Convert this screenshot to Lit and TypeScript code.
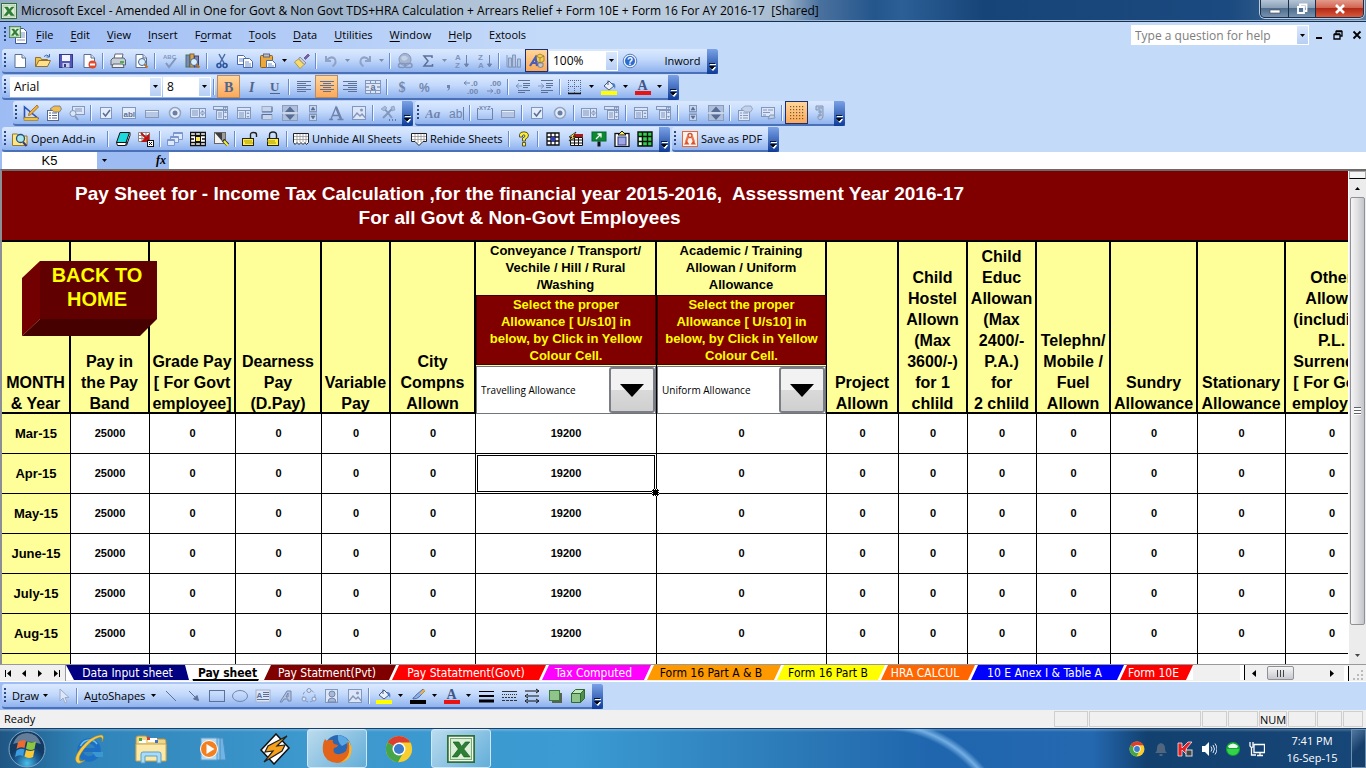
import { LitElement, html, svg, css, nothing } from "lit";
import { customElement } from "lit/decorators.js";
import { classMap } from "lit/directives/class-map.js";
import { styleMap } from "lit/directives/style-map.js";

const G = "#8297bd";
const page = svg`<path d="M3 1.5h7l3.500 3.500v9.500h-10.500z" fill="#fff" stroke="#5b6f93"/><path d="M10 1.500v3.500h3.500" fill="#dce6f6" stroke="#5b6f93"/>`;
const lens = svg`<path d="M11.500 11.500l3 3" stroke="#c0731c" stroke-width="2"/><circle cx="9" cy="9" r="3.500" fill="#d8efff" stroke="#4a6386"/>`;
const bucket = svg`<path d="M3 7l5-5 5 5-5 4z" fill="#e9f0fa" stroke="#46597c"/><path d="M7 6V1.500" stroke="#46597c"/><path d="M11 4c3 0 4 2 3 6-1-2-1-3-3-4z" fill="#4f7fc4"/>`;
const list = (c: string) => svg`<rect x=".5" y="3.500" width="15" height="9" fill="#d9e4f6" stroke="${c}"/><path d="M9.500 4v9M2 6h6M2 8h6M2 10h6M10 8h5" stroke="${c}"/><path d="M11 7h3l-1.500-2zM11 9h3l-1.500 2z" fill="${c}"/>`;
const combo = svg`<rect x=".5" y="1.500" width="14" height="3" fill="#d9e4f6" stroke="${G}"/><rect x="3.500" y="5.500" width="11" height="9" fill="#d9e4f6" stroke="${G}"/><path d="M10.500 1v14M5 8h4M5 10h4M5 12h4" stroke="${G}"/><path d="M11 2h3l-1.500 2zM11 8h3l-1.500-2zM11 11h3l-1.500 2z" fill="${G}"/>`;
const listDoc = svg`<rect x="1.500" y="2.500" width="13" height="11" fill="#d9e4f6" stroke="${G}"/><path d="M1 5.500h14M9.500 5v9M3 8h5M3 10h5M3 12h5" stroke="${G}"/><path d="M10.500 9h3l-1.500-2zM10.500 11h3l-1.500 2z" fill="${G}"/>`;
const cb = svg`<rect x="2.500" y="2.500" width="11" height="11" fill="#e4edfb" stroke="${G}"/><path d="M5 8l2.500 3L12 5" stroke="#5a6e94" stroke-width="1.500" fill="none"/>`;
const radio = svg`<circle cx="8" cy="8" r="5.500" fill="#e4edfb" stroke="#93a3c0" stroke-width="1.500"/><circle cx="8" cy="8" r="2.500" fill="#6b7fa5"/>`;
const btn = svg`<rect x="1.500" y="5.500" width="13" height="7" fill="#b8c8e4" stroke="#8799ba"/><path d="M2 6.500h12" stroke="#e8f0fc"/>`;
const spin = svg`<rect x=".5" y=".5" width="15" height="15" fill="#aebfdc" stroke="#8a9cbd"/><path d="M0 8h16" stroke="#e6eefb"/><path d="M3 7h10L8 1.500zM3 9.500h10L8 15z" fill="#586d94"/>`;
const scroll = svg`<rect x="4.500" y=".5" width="7" height="6" fill="#c7d5ec" stroke="${G}"/><rect x="4.500" y="9.500" width="7" height="6" fill="#c7d5ec" stroke="${G}"/><path d="M6 5h4L8 2zM6 11h4l-2 3zM4 8h8" fill="#586d94" stroke="#586d94" stroke-width=".6"/>`;
const prop = (a: string, b: string, c: string) => svg`<rect x="1.500" y="5.500" width="11" height="10" fill="${a}" stroke="${b}"/><path d="M3 8h2M6 8h5M3 10.500h2M6 10.500h5M3 13h2M6 13h5" stroke="${b}"/><path d="M4 4l4-3 6 0 1.500 3-2 3-5 0z" fill="${c}" stroke="${b}" stroke-width=".7"/>`;
const pic = svg`<rect x="1.500" y="1.500" width="13" height="13" fill="#dce6f6" stroke="${G}"/><path d="M2 13l4-5 3 3 2-2 3.500 4" fill="none" stroke="${G}" stroke-width="1.300"/><circle cx="10.500" cy="5" r="1.500" fill="${G}"/>`;
const lines = (rows: number[][], c = "#5d7097") => svg`${rows.map(([x, y, w]) => svg`<path d="M${x} ${y + 0.5}h${w}" stroke="${c}"/>`)}`;
const unhideSheet = svg`<path d="M.5 2.500h15v9l-2 2-1.500-2-2 2-2-2-2 2-2-2-2 2-1.500-2z" fill="#fff" stroke="#222"/><path d="M1 5.500h14M1 8.500h14M4 3v8M7 3v8M10 3v8M13 3v8" stroke="#8b8b8b" stroke-width=".7"/>`;
const rehideSheet = svg`<path d="M.5 2.500h15v8h-3.500l-4 4-4-4H.5z" fill="#fff" stroke="#222"/><path d="M1 5.500h14M1 8.500h14M4 3v7M7 3v9M10 3v8M13 3v7" stroke="#8b8b8b" stroke-width=".7"/>`;
const lock = (open: boolean) => svg`<rect x="${open ? 0.5 : 2.5}" y="7.500" width="11" height="7" fill="#ffee3a" stroke="#222"/><path d="M2 10h8M3 12h8" stroke="#a99700"/><path d="${open ? "M8.500 7V3.500q0-2 3-2t3 2V6" : "M4.500 7V4q0-3 3.500-3t3.500 3v3"}" fill="none" stroke="#222" stroke-width="1.400"/>`;
const letter = (t: string, x: number, y: number, s: number, c: string) => svg`<text class="gl" x="${x}" y="${y}" font-size="${s}" fill="${c}" font-weight="bold">${t}</text>`;
const excel = svg`<rect x=".5" y=".5" width="15" height="15" fill="#f4faf1" stroke="#2f7034"/><rect x="2" y="2" width="12" height="12" fill="#dcefd8" stroke="#79aa77" stroke-width=".6"/><path d="M3.500 4h3.300l1.500 2.500L10.500 4h2.500L9.600 8l3.600 4.500H9.700L8 10l-2 2.500H3L6.500 8z" fill="#2c8034" stroke="#175b20" stroke-width=".4"/>`;
const chrome = svg`<circle cx="8" cy="8" r="7.500" fill="#f7ce2d"/><path d="M8 8L1.500 4.300A7.500 7.500 0 0 1 14.500 4.300H8z" fill="#dc3e30"/><path d="M1.500 4.300A7.500 7.500 0 0 0 7.400 15.500L10.500 10 8 8z" fill="#46a54a"/><circle cx="8" cy="8" r="3.700" fill="#fff"/><circle cx="8" cy="8" r="2.900" fill="#3b7ccd"/>`;

const ICONS: Record<string, unknown> = {
  new: page,
  open: svg`<path d="M.5 13.500v-9h5l1 2h6v7z" fill="#f0c453" stroke="#94702a"/><path d="M.8 13.500l3-6h11.700l-3 6z" fill="#ffe08a" stroke="#94702a"/><path d="M9 3.500q3-3 5 0M14.500 1v3h-3" fill="none" stroke="#3d66ac"/>`,
  save: svg`<rect x="1.500" y="1.500" width="13" height="13" fill="#5257b8" stroke="#343a86"/><rect x="4" y="2" width="8" height="6" fill="#f2f5ff"/><rect x="4.500" y="10" width="7" height="4.500" fill="#c9cee6"/><rect x="6" y="11" width="2" height="3" fill="#333a80"/>`,
  perm: svg`${page}<circle cx="11.500" cy="11.500" r="4" fill="#e0492b"/><rect x="9" y="10.500" width="5" height="2" fill="#fff"/>`,
  print: svg`<path d="M4 6l1-5h8l-1 5z" fill="#fff" stroke="#667"/><path d="M1 7l2-2h11l1.500 2v5h-14.500z" fill="#c9ced6" stroke="#5a6373"/><path d="M3 11h10l1 3.500H2z" fill="#efefef" stroke="#5a6373"/><rect x="10" y="8" width="4" height="2" fill="#45b348"/>`,
  preview: svg`${page}${lens}`,
  spell: svg`${letter("ABC", 1, 6, 6, G)}<path d="M4 10l3 4 7-9" fill="none" stroke="${G}" stroke-width="2"/>`,
  research: svg`<rect x="1" y="2" width="3.500" height="12" fill="#7d86c5" stroke="#475"/><rect x="5" y="1" width="4" height="13" fill="#d9a24f" stroke="#764"/><rect x="9.500" y="3" width="4" height="11" fill="#8b80b8" stroke="#446"/>${lens}`,
  cut: svg`<path d="M5 1l5 9M11 1L6 10" stroke="#4a6ba6" stroke-width="1.500"/><circle cx="5" cy="12.500" r="2" fill="none" stroke="#28529a" stroke-width="1.600"/><circle cx="11" cy="12.500" r="2" fill="none" stroke="#28529a" stroke-width="1.600"/>`,
  copy: svg`<path d="M.5 2.500h6l2 2v7H.5z" fill="#fff" stroke="#4a6ba6"/><path d="M2 6h4M2 8h4" stroke="#6d8fc9"/><path d="M6.500 5.500h6l3 3v6h-9z" fill="#fff" stroke="#4a6ba6"/><path d="M8 9h4M8 11h6M8 13h6" stroke="#6d8fc9"/>`,
  paste: svg`<rect x=".5" y="2.500" width="12" height="12" rx="1" fill="#e9a93f" stroke="#8b6020"/><rect x="3.500" y="1" width="6" height="3" fill="#b8c0cc" stroke="#667"/><path d="M6.500 7.500h6l3 3v4h-9z" fill="#fff" stroke="#4a6ba6"/><path d="M8 11h4M8 13h6" stroke="#6d8fc9"/>`,
  brush: svg`<path d="M10 5l4-4 1.500 1.500-4 4z" fill="#7c5fa8" stroke="#4d3b77" stroke-width=".6"/><path d="M6 4l6 6-2 1.500L4.500 6z" fill="#c9ced6" stroke="#667" stroke-width=".6"/><path d="M4.500 6l5.500 5.500-4 4L.5 9z" fill="#f6dc6d" stroke="#a58120" stroke-width=".7"/>`,
  undo: svg`<path d="M3 3v5h5M3.500 7.500q4-5 8-2 3 4-2 8" fill="none" stroke="#90a3c7" stroke-width="2"/>`,
  redo: svg`<path d="M13 3v5H8M12.500 7.500q-4-5-8-2-3 4 2 8" fill="none" stroke="#90a3c7" stroke-width="2"/>`,
  link: svg`<circle cx="8" cy="6.500" r="6" fill="#a6b6d3" stroke="#8496ba"/><path d="M4 4q4-3 7 1-2 4-6 2z" fill="#c3d0e6"/><rect x="1.500" y="10.500" width="7" height="4" rx="2" fill="none" stroke="#8496ba" stroke-width="1.500"/><rect x="8" y="10.500" width="7" height="4" rx="2" fill="none" stroke="#8496ba" stroke-width="1.500"/>`,
  sum: svg`<path d="M12 5V3H4L8 8 4 13H12.500V11" fill="none" stroke="#5d7097" stroke-width="1.500"/>`,
  az: svg`${letter("A", 1, 7, 8, "#7f93b9")}${letter("Z", 1, 15, 8, "#7f93b9")}<path d="M12.500 2v10M10.500 11l2 3L14.500 11z" stroke="#7084ab" fill="#7084ab"/>`,
  za: svg`${letter("Z", 1, 7, 8, "#7f93b9")}${letter("A", 1, 15, 8, "#7f93b9")}<path d="M12.500 2v10M10.500 11l2 3L14.500 11z" stroke="#7084ab" fill="#7084ab"/>`,
  chart: svg`<path d="M1 2v12h14" fill="none" stroke="${G}"/><path d="M2.500 5h3v9h-3zM6.500 2h3v12h-3zM11.500 6h3v8h-3z" fill="#b4c3de" stroke="${G}"/>`,
  drawing: svg`<path d="M7 3l4-2 4 2v5l-4 2-4-2z" fill="#f1cd57" stroke="#8a6c1c" stroke-width=".7"/><path d="M7 3l4 2 4-2M11 5v5" fill="none" stroke="#8a6c1c" stroke-width=".7"/><path d="M9 10h5v3.500q-2.500 2-5 0z" fill="#c4c8d2" stroke="#5c6577" stroke-width=".7"/><path d="M1 13L6.500 4.500 8 13M3 10h5" fill="none" stroke="#4a5fb4" stroke-width="2.200"/>`,
  help: svg`<circle cx="8" cy="8" r="6.800" fill="#e5effd" stroke="#5a7fbd"/><circle cx="8" cy="8" r="5" fill="#2c6bd0"/>${letter("?", 5, 11.6, 10, "#fff")}`,
  b: svg`<text class="se" x="3" y="13" font-size="14" font-weight="bold" fill="#51648b">B</text>`,
  i: svg`<text class="se" x="5" y="13" font-size="14" font-weight="bold" font-style="italic" fill="#51648b">I</text>`,
  u: svg`<text class="se" x="3" y="12" font-size="13" font-weight="bold" fill="#51648b">U</text><path d="M3 14.500h10" stroke="#51648b"/>`,
  left: lines([[1, 2, 14], [1, 4, 9], [1, 6, 14], [1, 8, 9], [1, 10, 14], [1, 12, 9]]),
  center: lines([[1, 2, 14], [4, 4, 8], [1, 6, 14], [4, 8, 8], [1, 10, 14], [4, 12, 8]]),
  right: lines([[1, 2, 14], [6, 4, 9], [1, 6, 14], [6, 8, 9], [1, 10, 14], [6, 12, 9]]),
  merge: svg`<rect x=".5" y="1.500" width="15" height="13" fill="#dce6f6" stroke="${G}"/><path d="M1 4.500h14M1 11.500h14M5.500 2v2M10.500 2v2M5.500 12v3M10.500 12v3" stroke="${G}"/>${letter("a", 5.5, 10.5, 9, "#5d7097")}<path d="M1 8h3M12 8h3" stroke="#5d7097"/>`,
  usd: svg`<text class="se" x="4.500" y="13" font-size="14" font-weight="bold" fill="#7286ad">$</text>`,
  pct: letter("%", 2, 13, 12, "#7286ad"),
  comma: svg`<path d="M7 6h3v3q0 2-3 3 1.500-1.500 1.500-3H7z" fill="#7286ad"/>`,
  decup: svg`${letter(".0", 8, 7, 8, "#7286ad")}${letter(".00", 4, 15, 8, "#7286ad")}<path d="M7 4H1M3.500 2L1 4l2.500 2" stroke="#7286ad" fill="none"/>`,
  decdn: svg`${letter(".00", 4, 7, 8, "#7286ad")}${letter(".0", 8, 15, 8, "#7286ad")}<path d="M1 12h6M4.500 10L7 12l-2.500 2" stroke="#7286ad" fill="none"/>`,
  outd: svg`${lines([[3, 1, 12], [8, 4, 7], [8, 6, 7], [8, 8, 5], [3, 11, 12], [3, 13, 7]])}<path d="M7 7H1M4 4.500L1 7l3 2.500" stroke="${G}" fill="none"/>`,
  ind: svg`${lines([[3, 1, 12], [8, 4, 7], [8, 6, 7], [8, 8, 5], [3, 11, 12], [3, 13, 7]])}<path d="M0 7h6M3 4.500L6 7 3 9.500" stroke="${G}" fill="none"/>`,
  bord: svg`<path d="M1.500 1v13M7.500 1v13M13.500 1v13M1 1.500h13M1 7.500h13" stroke="#51648b" stroke-dasharray="1 1"/><path d="M1 14.500h13" stroke="#111" stroke-width="1.500"/>`,
  fill: svg`${bucket}<rect x="0" y="12" width="16" height="4" fill="#ffff00"/>`,
  font: svg`<text class="se" x="2.500" y="11" font-size="14" font-weight="bold" fill="#3f5787">A</text><rect x="0" y="12" width="16" height="4" fill="#e81313"/>`,
  design: svg`<path d="M1.500 2v11h13z" fill="#cfdcf7" stroke="#2b52b0" stroke-width="1.600"/><path d="M6 8l8-8 1.500 2-8 8-2 .5z" fill="#f2b23c" stroke="#875a12" stroke-width=".7"/><rect x="1" y="12.500" width="14" height="3" fill="#f0c040" stroke="#96711c" stroke-width=".6"/>`,
  prop: prop("#fff", "#59688a", "#f0bd4f"),
  propg: prop("#dce6f6", G, "#c2d0e8"),
  code: svg`<rect x="3.500" y="1.500" width="12" height="8" fill="#dce6f6" stroke="${G}"/><path d="M6 4h7M6 6h7" stroke="${G}"/><circle cx="4" cy="8.500" r="3" fill="#dce6f6" stroke="${G}"/><path d="M6 11l3 4" stroke="${G}" stroke-width="2"/>`,
  form: svg`<rect x="1.500" y="2.500" width="13" height="9" fill="#dce6f6" stroke="${G}"/><path d="M3 5h4M8 5h5M3 7.500h7M3 10h3" stroke="${G}"/><path d="M8 14l2-4 4 0 1 3z" fill="#c2d0e8" stroke="${G}"/>`,
  cb, radio, btn, spin, scroll, pic, combo, listDoc,
  list: list(G),
  ab: svg`<rect x="1.500" y="2.500" width="13" height="11" fill="#e4edfb" stroke="${G}"/>${letter("abl", 2.5, 11.5, 8, "#5d7097")}`,
  toggle: svg`<rect x="3" y="1.500" width="10" height="5" fill="#c7d5ec" stroke="#9aabca"/><path d="M3 7h10v-5" stroke="#5d7097" fill="none"/><rect x="3" y="9.500" width="10" height="5" fill="#c7d5ec" stroke="#9aabca"/><path d="M3 14V9.500h10" stroke="#5d7097" fill="none"/>`,
  bigA: svg`<path d="M1 14.500h4M9.500 14.500h6M3 14L8 2l5 12M4.500 10.500h6.500" fill="none" stroke="#6f83aa" stroke-width="1.300"/><path d="M8 2l5 12" stroke="#6f83aa" stroke-width="2.400"/>`,
  tools: svg`<path d="M3 13L12 4M4 3l8 10" stroke="${G}" stroke-width="2"/><path d="M1 4l4-3 2 2-3 3zM11 2l3-1 1 4-3 1z" fill="#a9b9d5" stroke="${G}" stroke-width=".6"/><path d="M9 15h1M12 15h1M15 15h1" stroke="#51648b" stroke-width="1.500"/>`,
  aa: svg`<text class="se" x="0" y="13" font-size="13" font-weight="bold" font-style="italic" fill="#6f83aa">Aa</text>`,
  abl: svg`<text class="gl" x="1" y="13" font-size="12" fill="#6f83aa">ab</text><path d="M15.500 2v13" stroke="#6f83aa"/>`,
  xyz: svg`<path d="M2 3.500H.5v11h15v-11H14" fill="none" stroke="#6f83aa"/>${letter("XYZ", 2, 5, 6, "#6f83aa")}`,
  dots: svg`<g fill="#7c5a22">${[1, 4, 7, 10, 13].map((x) => [1, 4, 7, 10, 13].map((y) => svg`<rect x="${x}" y="${y}" width="1.200" height="1.200"/>`))}</g>`,
  run: svg`<path d="M4 1h7v10q0 3-3 4-3-1-2-4h2V5H4z" fill="#b8c6de" stroke="${G}"/><path d="M6 3h4M6 7h4M6 10h4" stroke="${G}"/>`,
  addin: svg`<path d="M.5 3h5l1.500 2h8v9.500H.5z" fill="#fbe58a" stroke="#97792b"/><path d="M11 11l3.500 4" stroke="#3f3a70" stroke-width="2"/><circle cx="8.500" cy="7.500" r="4" fill="#a8e6ee" stroke="#284e78" stroke-width="1.300"/>`,
  eraser: svg`<path d="M5 1.500h9.500L11 11.500H1.500z" fill="#1bd9dc" stroke="#111"/><path d="M1.500 11.500l1 3h8l1-3zM11.500 14.500l3.500-10v-3" fill="#fff" stroke="#111"/>`,
  gridx: svg`<path d="M.5 1.500h11v9H.5zM.5 4.500h11M.5 7.500h11M4 1.500v9M8 1.500v9" fill="#fff" stroke="#888"/><path d="M3 2l7 7M10.500 4.500V10H5z" fill="#d22020" stroke="#c01010" stroke-width="1.800"/><rect x="9.500" y="9.500" width="6" height="6" fill="#fff" stroke="#111"/><path d="M11 11l3 3M14 11l-3 3" stroke="#111"/>`,
  cascade: svg`<path d="M6.500 1.500h9v7h-9z" fill="#dfe9fb" stroke="#7b96cd"/><path d="M3.500 5.500h8v6h-8z" fill="#dfe9fb" stroke="#7b96cd"/><path d="M.5 8.500h7v6h-7z" fill="#dfe9fb" stroke="#7b96cd"/><path d="M6.500 2.500h9M3.500 6.500h8M.5 9.500h7" stroke="#7b96cd"/>`,
  fit: svg`<path d="M.5 1.500h15v13H.5zM.5 4.500h15M.5 11.500h15M5.500 1.500v3M10.500 1.500v3M5.500 11.500v3M10.500 11.500v3" fill="#fff" stroke="#111" stroke-width="1.300"/><rect x="5.500" y="5.500" width="5" height="5" fill="#ffe94a" stroke="#111"/><path d="M1 8h3M12 8h3" stroke="#111" stroke-width="1.500"/>`,
  paint: svg`<rect x="1.500" y="1.500" width="11" height="11" fill="#f4f4f4" stroke="#666"/><path d="M2 2h7v8z" fill="#3d3d3d"/><path d="M9 2h3v8H9z" fill="#9c9c9c"/><path d="M10 9l5 5" stroke="#333" stroke-width="3.500"/><path d="M11 10l4 4.500" stroke="#f4ef3a" stroke-width="2"/>`,
  unlock: lock(true), lock: lock(false), unhideSheet, rehideSheet,
  qm: svg`<path d="M3.500 6V3.500Q4 .8 8 .8t4.500 3.200Q12.500 7 9.500 8v2h-3V7q3-1 2.500-2.500-1-1.500-2.500 0V6zM6.500 11.500h3V15h-3z" fill="#fff02a" stroke="#333" stroke-width=".8"/>`,
  cells: svg`<path d="M2 2h12v12H2zM2 6h12M2 10h12M6 2v12M10 2v12" fill="#fff" stroke="#111" stroke-width="1.300"/><rect x="6" y="6" width="4" height="4" fill="#2b3bd0"/>`,
  zap: svg`<path d="M2.500 6.500h12v8h-12zM2.500 9h12M2.500 12h12M6.500 6v8M10.500 6v8" fill="#fff" stroke="#111"/><rect x="5" y="3" width="10" height="3" fill="#b01818"/><path d="M8 1L1 6h3L1 10l7-4H5z" fill="#ffe94a" stroke="#111" stroke-width=".7"/>`,
  sign: svg`<rect x="1" y="1" width="14" height="9" fill="#0d8a2e" stroke="#063"/><path d="M5 8l5-5M6.500 3H10v3.500" stroke="#fff" fill="none" stroke-width="1.300"/><path d="M6.500 10.500h3v5h-3z" fill="#111"/>`,
  clip: svg`<rect x="1" y="2.500" width="14" height="13" fill="#fff" stroke="#111" stroke-width="1.300"/><path d="M4 4l4-4 4 4z" fill="#ffe94a" stroke="#111"/><rect x="4" y="6" width="8" height="8" fill="#9ea6e8" stroke="#333a80"/>`,
  green: svg`<path d="M1 1h14v14H1z" fill="#2bd24a" stroke="#111" stroke-width="1.400"/><path d="M2 5h2.800v9H2z" fill="#e9ffe9"/><path d="M1 5.500h14M1 10.500h14M5.500 1v14M10.500 1v14" stroke="#111" stroke-width="1.400"/>`,
  pdf: svg`<rect x=".5" y=".5" width="15" height="15" fill="#fdf3ee" stroke="#e4693d"/><circle cx="8" cy="4.500" r="2" fill="none" stroke="#d9532c" stroke-width="1.500"/><path d="M6 5.500L4 11M10 5.500l2 5.500" stroke="#e9744f" stroke-width="2.200"/><path d="M2 13.500l2.500-4 3 4zM14 13.500l-2.500-4-3 4z" fill="#d9532c"/>`,
  cursor: svg`<path d="M5 1v12l3-3 2 5 2-1-2-4.500h4z" fill="#dce6f6" stroke="#9aabca"/>`,
  line: svg`<path d="M3 3l10 10" stroke="#5d7097"/>`,
  arrow: svg`<path d="M3 3l9 9M12.500 12.500l-5-1.500 3.500-3.500z" stroke="#5d7097" fill="#5d7097"/>`,
  rect: svg`<rect x=".5" y="2.500" width="15" height="11" fill="none" stroke="#5d7097"/>`,
  oval: svg`<ellipse cx="8" cy="8" rx="7.500" ry="5.500" fill="none" stroke="#7286ad"/>`,
  tbox: svg`<rect x="1" y="2" width="14" height="12" fill="#dce6f6" stroke="#a3b2cf"/>${letter("A", 1.5, 10, 8, "#5d7097")}${lines([[8, 4, 6], [8, 6, 6], [8, 8, 6], [2, 11, 12]])}`,
  wart: svg`<path d="M2 14L9 3h4v10h-3v-2H6l-2 3zM8 9h2V5z" fill="#b4c3de" stroke="#7286ad"/>`,
  diag: svg`<circle cx="8" cy="8" r="6" fill="none" stroke="${G}" stroke-dasharray="3 2"/><circle cx="8" cy="2.500" r="2" fill="#dce6f6" stroke="${G}"/><circle cx="3" cy="11" r="2" fill="#dce6f6" stroke="${G}"/><circle cx="13" cy="11" r="2" fill="#dce6f6" stroke="${G}"/>`,
  clipart: svg`<rect x="1.500" y="1.500" width="12" height="13" fill="#dce6f6" stroke="${G}"/><circle cx="8" cy="6" r="3" fill="#a9b9d5" stroke="#7286ad"/><path d="M4 14q0-4 4-4t4 4z" fill="#a9b9d5" stroke="#7286ad"/>`,
  lcol: svg`<path d="M3 10q2-1 3-3l7-6 2 2-6 6q-2 2-6 2z" fill="#8fb0e4" stroke="#3c5a95" stroke-width=".8"/><path d="M10 5l4-4 1.500 1.500-4 4z" fill="#f0b040"/><rect y="12" width="16" height="4" fill="#000"/>`,
  lstyle: svg`<path d="M1 3.500h15" stroke="#000"/><path d="M1 8h15" stroke="#000" stroke-width="2"/><path d="M1 13h15" stroke="#000" stroke-width="3"/>`,
  dash: svg`<path d="M1 3.500h15" stroke="#333"/><path d="M1 6.500h15" stroke="#333" stroke-dasharray="1 1"/><path d="M1 9.500h15" stroke="#333" stroke-dasharray="2 1"/><path d="M1 12.500h15" stroke="#333" stroke-dasharray="3 1"/>`,
  arrs: svg`<path d="M1 3h13M12 1l3 2-3 2M3 8h12M4 6L1 8l3 2M3 13h11M4 11l-3 2 3 2M12 11l3 2-3 2" stroke="#111" fill="none"/>`,
  shad: svg`<rect x="5" y="5" width="10" height="10" fill="#56644f"/><rect x="2.500" y="2.500" width="10" height="10" fill="#8fc48a" stroke="#3d7a3d"/>`,
  cube: svg`<path d="M1.500 5.500h9v9h-9z" fill="#8fc48a" stroke="#2f6a2f"/><path d="M1.500 5.500l4-4h9l-4 4z" fill="#c4e6bd" stroke="#2f6a2f"/><path d="M10.500 5.500l4-4v9l-4 4z" fill="#4f8f4c" stroke="#2f6a2f"/>`,
  excel, chrome,
};

const glyph = (n: string, size = 16) =>
  html`<svg class="ic" width="${size}" height="${size}" viewBox="0 0 16 16" aria-hidden="true">${ICONS[n]}</svg>`;
const tri = html`<svg class="ic" width="5" height="3" viewBox="0 0 5 3" aria-hidden="true"><path d="M0 0h5L2.500 3z" fill="currentColor"/></svg>`;

/** Toolbar notation: "|" separator, "v" / "x" enabled / disabled menu arrow, "*" pressed button, "+" pressed format button. */
const tools = (spec: string) =>
  spec.split(" ").map((t) => {
    if (t === "|") return html`<span class="sep"></span>`;
    if (t === "v" || t === "x") return html`<button class=${classMap({ dd: true, off: t === "x" })} aria-label="More options">${tri}</button>`;
    const on = t[0] === "*" || t[0] === "+";
    const name = on ? t.slice(1) : t;
    return html`<button class=${classMap({ tool: true, on, soft: t[0] === "+" })} aria-label=${name}>${glyph(name)}</button>`;
  });
const cap = html`<button class="cap" aria-label="Toolbar options"><svg class="ic" width="7" height="8" viewBox="0 0 7 8" aria-hidden="true"><path d="M1 1.500h6M1.500 4.500h5l-2.500 3z" stroke="#fff" fill="#fff"/><path d="M0 .5h6M.5 3.500h5L3 6z" stroke="#000" fill="#000" stroke-width=".8"/></svg></button>`;

const shared = css`
  :host { font-family: "Open Sans", "Noto Sans", sans-serif; }
  * { box-sizing: border-box; }
  button, input, select { font: inherit; color: inherit; border: 0; padding: 0; margin: 0; background: none; border-radius: 0; }
  .ic { display: block; flex: none; }
  .gl { font-family: "Liberation Sans", sans-serif; }
  .se { font-family: "Liberation Serif", serif; }
`;

const barStyles = css`
  .bar { display: inline-flex; vertical-align: top; align-items: center; height: 25px; border-radius: 3px 0 0 3px; background: linear-gradient(#dbe9fe, #c3d9fb 45%, #8fb2ee); border-bottom: 2px solid #4a71b8; }
  .grip { flex: none; width: 4px; height: 16px; margin-left: 2px; background: radial-gradient(circle at 1px 1px, #2c4680 1px, transparent 1px) 0 0 / 6px 4px; }
  .gap { width: 3px; }
  .tool { width: 23px; height: 23px; display: grid; place-items: center; }
  .on { background: linear-gradient(#ffd59b, #fba95b); border: 1px solid #1d2f6e; }
  .soft { border-color: #b88a62; }
  .dd { width: 11px; height: 23px; display: grid; place-items: center; }
  .off { color: #7d8fae; }
  .sep { width: 6px; height: 16px; background: linear-gradient(90deg, transparent 2px, #6a8ccb 2px 3px, #f0f6ff 3px 4px, transparent 4px); }
  .cap { align-self: stretch; width: 11px; margin-bottom: -2px; display: grid; place-items: end center; padding-bottom: 3px; background: linear-gradient(#7ba2e7, #0d3b98); border-radius: 0 2px 3px 0; }
  .text { display: flex; align-items: center; gap: 3px; font-size: 11px; height: 23px; white-space: nowrap; }
`;

const MENUS: [string, string, string][] = [
  ["", "F", "ile"], ["", "E", "dit"], ["", "V", "iew"], ["", "I", "nsert"], ["F", "o", "rmat"], ["", "T", "ools"],
  ["", "D", "ata"], ["", "U", "tilities"], ["", "W", "indow"], ["", "H", "elp"], ["E", "x", "tools"],
];

@customElement("excel-toolbars")
class ExcelToolbars extends LitElement {
  static styles = [shared, barStyles, css`
    :host { display: block; font-size: 12px; background: linear-gradient(90deg, #9ebcf4, #c4daf9 40%); color: #000; }
    .menu { display: flex; align-items: center; gap: 1px; height: 26px; padding-left: 2px; }
    .item { padding: 0 8px; font-size: 11px; line-height: 20px; }
    .item u { text-underline-offset: 2px; }
    .ask { margin-left: auto; display: flex; width: 178px; height: 20px; border: 1px solid #fff; background: #fff; }
    .ask input, .box input { flex: 1; min-width: 0; background: #fff; padding-left: 3px; font-size: 12px; outline: 0; }
    .ask input::placeholder { color: #7d7d7d; opacity: 1; }
    .arrow { width: 11px; flex: none; display: grid; place-items: center; background: linear-gradient(#dbe8fd, #b7cff4); }
    .mdi { display: flex; align-items: center; gap: 8px; padding: 0 4px 0 3px; }
    .mdi button { width: 11px; height: 14px; display: grid; place-items: center; }
    .row { display: flex; height: 26px; gap: 2px; padding: 1px 0 1px 2px; }
    .inset { padding-left: 13px; }
    .box { display: flex; height: 20px; border: 1px solid #fff; background: #fff; margin-left: 1px; }
    .font { width: 152px; margin-left: 2px; }
    .size { width: 48px; }
    .zoom { width: 69px; }
    .open { width: 97px; padding-left: 4px; }
    .unhide { width: 116px; padding-left: 3px; }
    .rehide { width: 100px; padding-left: 5px; }
    .inword { width: 66px; justify-content: center; padding-left: 17px; }
    .pdf { width: 90px; padding-left: 4px; }
    .formula { display: flex; height: 17px; background: #fff; border-left: 2px solid #9ebcf4; }
    .name { width: 95px; text-align: center; font: 13px "Liberation Sans", sans-serif; outline: 0; }
    .fx { width: 72px; background: #9ebcf4; display: flex; justify-content: space-between; align-items: center; padding: 0 3px; font: italic bold 12px "Liberation Serif", serif; }
    .fx button { width: 9px; height: 16px; display: grid; place-items: center; }
    .edit { flex: 1; outline: 0; background: #fff; }
  `];

  combo(cls: string, label: string, value: string) {
    return html`<div class="box ${cls}"><input aria-label=${label} .value=${value} /><button class="arrow" aria-label="${label} list">${tri}</button></div>`;
  }

  render() {
    return html`
      <nav class="menu">
        <span class="grip"></span>
        <svg class="ic" width="18" height="18" viewBox="0 0 18 18" aria-hidden="true"><path d="M6.500 2.500h8l3 3v12h-11z" fill="#fff" stroke="#3d5a95"/><path d="M11 7h5M11 9h5M11 11h5M8 14h8" stroke="#7a92c4"/><svg width="12" height="12" viewBox="0 0 16 16">${ICONS.excel}</svg></svg>
        ${MENUS.map(([a, u, b]) => html`<button class="item">${a}<u>${u}</u>${b}</button>`)}
        <div class="ask"><input aria-label="Help question" placeholder="Type a question for help" /><button class="arrow" aria-label="Help list">${tri}</button></div>
        <div class="mdi">
          <button aria-label="Minimize"><svg class="ic" width="10" height="10" viewBox="0 0 10 10"><path d="M2 8h6" stroke="#000" stroke-width="2"/></svg></button>
          <button aria-label="Restore"><svg class="ic" width="10" height="10" viewBox="0 0 10 10"><path d="M3 4V1.500h6V6H7M1 4.500h6V9H1zM3 1h6M1 4h6" fill="none" stroke="#000" stroke-width="1.300"/></svg></button>
          <button aria-label="Close"><svg class="ic" width="10" height="10" viewBox="0 0 10 10"><path d="M1.500 1.500l7 7M8.500 1.500l-7 7" stroke="#000" stroke-width="1.800"/></svg></button>
        </div>
      </nav>
      <div class="row"><div class="bar"><span class="grip"></span>${tools("new open save perm | print preview | spell research | cut copy paste v brush | undo x redo x | link sum x az za | chart *drawing")}${this.combo("zoom", "Zoom", "100%")}${tools("help")}<button class="text inword">Inword</button>${cap}</div></div>
      <div class="row"><div class="bar"><span class="grip"></span>${this.combo("font", "Font", "Arial")}${this.combo("size", "Font size", "8")}${tools("| +b i u | left +center right merge | usd pct comma decup decdn | outd ind | bord v fill v font v")}<span class="gap"></span>${cap}</div></div>
      <div class="row inset">
        <div class="bar"><span class="grip"></span>${tools("design prop code | cb ab btn radio list combo listDoc toggle spin scroll bigA pic | tools")}<span class="gap"></span>${cap}</div>
        <div class="bar"><span class="grip"></span>${tools("aa abl | xyz btn | cb radio | list combo | listDoc combo | scroll spin | propg form | *dots run")}<span class="gap"></span>${cap}</div>
      </div>
      <div class="row">
        <div class="bar"><span class="grip"></span><button class="text open">${glyph("addin")}Open Add-in</button>${tools("| eraser gridx | cascade fit paint | unlock lock |")}<button class="text unhide">${glyph("unhideSheet")}Unhide All Sheets</button><button class="text rehide">${glyph("rehideSheet")}Rehide Sheets</button>${tools("| qm | cells zap sign clip green")}<span class="gap"></span>${cap}</div>
        <div class="bar"><span class="grip"></span><button class="text pdf">${glyph("pdf")}Save as PDF</button>${cap}</div>
      </div>
      <div class="formula">
        <input class="name" aria-label="Name box" .value=${"K5"} />
        <div class="fx"><button aria-label="Names">${tri}</button><span>fx</span></div>
        <input class="edit" aria-label="Formula" />
      </div>`;
  }
}

const COLS: [number, string[]][] = [
  [69, ["MONTH", "& Year"]], [79, ["Pay in", "the Pay", "Band"]], [86, ["Grade Pay", "[ For Govt", "employee]"]],
  [86, ["Dearness", "Pay", "(D.Pay)"]], [69, ["Variable", "Pay"]], [85, ["City", "Compns", "Allown"]],
  [181, ["Conveyance / Transport/", "Vechile / Hill / Rural", "/Washing", "Travelling Allowance"]],
  [170, ["Academic / Training", "Allowan / Uniform", "Allowance", "Uniform Allowance"]],
  [72, ["Project", "Allown"]], [69, ["Child", "Hostel", "Allown", "(Max", "3600/-)", "for 1", "chlild"]],
  [69, ["Child", "Educ", "Allowan", "(Max", "2400/-", "P.A.)", "for", "2 chlild"]],
  [74, ["Telephn/", "Mobile /", "Fuel", "Allown"]], [87, ["Sundry", "Allowance"]], [88, ["Stationary", "Allowance"]],
  [93, ["Other", "Allown", "(including", "P.L.", "Surrender", "[ For Govt", "employee]"]],
];
const MONTHS = ["Mar-15", "Apr-15", "May-15", "June-15", "July-15", "Aug-15", ""];
const lineBreaks = (ls: string[]) => ls.map((l, i) => (i ? html`<br />${l}` : l));

@customElement("pay-grid")
class PayGrid extends LitElement {
  static styles = [shared, css`
    :host { display: flex; min-height: 0; border-top: 2px solid #6d6a6a; border-left: 2px solid #8c9096; background: #fff; font-family: "Liberation Sans", sans-serif; }
    .view { position: relative; flex: 1; min-width: 0; overflow: hidden; }
    table { table-layout: fixed; border-collapse: separate; border-spacing: 0; width: 0; font-weight: bold; color: #000; }
    th, td { padding: 0; text-align: center; border: solid #000; border-width: 0 1px 1px 0; white-space: nowrap; }
    .title { height: 71px; background: #800000; color: #fff; font-size: 19px; line-height: 24px; border-width: 0 0 2px; white-space: pre; vertical-align: top; padding-top: 11px; }
    .head { height: 172px; background: #ffff99; font-size: 16px; line-height: 21px; vertical-align: bottom; border-width: 0 2px 2px 0; }
    .low { margin-bottom: -2px; }
    .pick { vertical-align: top; font-size: 13px; line-height: 17px; border-width: 0 1px 0 0; }
    .what { padding-bottom: 2px; border-right: 1px solid #000; }
    .note { background: #800000; color: #ffff00; border: 1px solid #400; }
    .choice { display: grid; grid-template-columns: 1fr 46px; height: 48px; margin-top: 1px; background: #fff; border: 1px solid #70757c; font: 10px/46px "Open Sans", sans-serif; }
    .choice select { grid-area: 1 / 1 / 2 / 3; appearance: none; padding-left: 4px; outline: 0; }
    .choice span { grid-area: 1 / 2; display: grid; place-items: center; pointer-events: none; border: 2px solid #7b7e84; border-radius: 3px; background: linear-gradient(#f2f2f2 50%, #dadada 50%, #cfcfcf); }
    .month { height: 40px; padding-bottom: 1px; background: #ffff99; font-size: 13px; }
    .val { height: 40px; padding-bottom: 1px; font-size: 11px; }
    .cur { position: relative; box-shadow: inset 0 0 0 1px #fff, inset 0 0 0 2px #000; }
    .cur::after { content: ""; position: absolute; right: -3px; bottom: -3px; width: 5px; height: 5px; background: #000; border: 1px dotted #fff; }
    .home { position: absolute; left: 20px; top: 90px; width: 135px; height: 75px; color: #ffff00; font: bold 20px/24px "Liberation Sans", sans-serif; display: grid; }
    .home svg, .home span { grid-area: 1 / 1; }
    .home span { position: relative; padding: 2px 0 0 15px; }
    .vs { flex: none; width: 18px; display: flex; flex-direction: column; background: #ececec; border-left: 1px solid #fff; }
    .split { height: 8px; background: #f4f4f4; border: 1px solid #aaa; border-bottom: 1px solid #000; }
    .vs button { height: 18px; display: grid; place-items: center; color: #444; }
    .thumb { flex: 1; margin: 0 1px; border: 1px solid #8f9196; border-radius: 2px; background: linear-gradient(90deg, #f5f5f5, #e2e2e4 45%, #c4c5ca); display: grid; place-items: center; }
    .track { height: 21px; }
    .marks { width: 7px; height: 8px; background: repeating-linear-gradient(#5f6166 0 1px, #fff 1px 3px); }
  `];

  head([, text]: [number, string[]]) {
    if (text.length !== 4 || text[0].startsWith("Tele")) return html`<th scope="col" class="head"><div class="low">${lineBreaks(text)}</div></th>`;
    return html`<th scope="col" class="head pick">
      <div class="what">${lineBreaks(text.slice(0, 3))}</div>
      <div class="note">Select the proper<br />Allowance [ U/s10] in<br />below, by Click in Yellow<br />Colour Cell.</div>
      <div class="choice"><select aria-label=${text[0]}><option>${text[3]}</option></select>
        <span><svg class="ic" width="24" height="13" viewBox="0 0 24 13" aria-hidden="true"><path d="M0 0h24L12 13z"/></svg></span></div>
    </th>`;
  }

  render() {
    return html`
      <div class="view">
        <table>
          <colgroup>${COLS.map(([w]) => html`<col style=${styleMap({ width: `${w}px` })} />`)}</colgroup>
          <tr><th class="title" colspan="11">Pay Sheet for - Income Tax Calculation ,for the financial year 2015-2016,  Assessment Year 2016-17<br />For all Govt &amp; Non-Govt Employees</th><th class="title" colspan="4"></th></tr>
          <tr>${COLS.map((c) => this.head(c))}</tr>
          ${MONTHS.map((m, r) => html`<tr><th scope="row" class="month">${m}</th>${COLS.slice(1).map((_, c) =>
            html`<td class=${classMap({ val: true, cur: r === 1 && c === 5 })}>${m ? (c === 0 ? "25000" : c === 5 ? "19200" : "0") : nothing}</td>`)}</tr>`)}
        </table>
        <button class="home"><svg width="135" height="75" viewBox="0 0 135 75" aria-hidden="true"><path d="M18 0h117v58H18z" fill="#600000"/><path d="M0 17L18 0v58L0 75z" fill="#720000"/><path d="M0 75l18-17h117l-17 17z" fill="#460000"/></svg><span>BACK TO<br />HOME</span></button>
      </div>
      <div class="vs"><div class="split"></div><button aria-label="Scroll up"><svg class="ic" width="5" height="3" viewBox="0 0 5 3"><path d="M0 3h5L2.500 0z"/></svg></button><div class="thumb"><div class="marks"></div></div><div class="track"></div><button aria-label="Scroll down">${tri}</button></div>`;
  }
}

const TABS: [string, number, string, string][] = [
  ["Pay Statment(Pvt)", 132, "#800000", "#fff"], ["Pay Statatment(Govt)", 154, "#ff0000", "#fff"], ["Tax Computed", 109, "#ff00ff", "#fff"],
  ["Form 16 Part A & B", 134, "#ff9900", "#000"], ["Form 16 Part B", 108, "#ffff00", "#000"], ["HRA CALCUL", 94, "#ff6600", "#fff"],
  ["10 E Anex I & Table A", 153, "#0000ff", "#fff"], ["Form 10E", 73, "#ff0000", "#fff"],
];

@customElement("sheet-tabs")
class SheetTabs extends LitElement {
  static styles = [shared, css`
    :host { display: flex; height: 18px; background: #f0f0f0; border-top: 1px solid #999; border-bottom: 1px solid #fff; font: 12px/16px "DejaVu Sans Condensed", "Noto Sans", sans-serif; color: #000; }
    .nav { width: 66px; display: flex; justify-content: space-around; align-items: center; border-right: 1px solid #999; }
    .tab { height: 15px; flex: none; display: block; padding-right: 6px; line-height: 16px; text-align: center; white-space: nowrap; margin-left: -4px; clip-path: polygon(7px 0, 100% 0, calc(100% - 7px) 100%, 0 100%); }
    .tabs { display: flex; background: linear-gradient(#fff 15px, #f0f0f0 15px); }
    .first { width: 123px; margin: 0; background: #000080; color: #fff; padding: 0; clip-path: polygon(0 0, 119px 0, 100% 100%, 8px 100%); }
    .sel { width: 77px; height: 16px; margin: 0 2px 0 0; padding: 0; font-weight: bold; background: #fff; border-bottom: 2px solid #000; clip-path: polygon(0 0, 100% 0, calc(100% - 8px) 100%, 4px 100%); }
    .edge { flex: 1; }
    .hs { width: 104px; display: flex; align-items: center; padding-left: 3px; }
    .bar { width: 5px; height: 15px; background: #fff; border-right: 1px solid #000; }
    .thumb { width: 27px; height: 14px; margin: 0 auto 0 7px; border: 1px solid #8f9196; border-radius: 2px; background: linear-gradient(#f5f5f5, #c8c9cd); display: grid; place-items: center; }
    .marks { width: 8px; height: 7px; background: repeating-linear-gradient(90deg, #444 0 1px, transparent 1px 3px); }
    .corner { width: 17px; }
    button { display: grid; place-items: center; width: 12px; height: 14px; }
    .hs .bar { margin-left: 6px; }
  `];
  arrow(d: string, label: string) {
    return html`<button aria-label=${label}><svg class="ic" width="7" height="7" viewBox="0 0 7 7"><path d="${d}" /></svg></button>`;
  }
  render() {
    return html`
      <div class="nav">${this.arrow("M0 0h1v7H0zM6 0v7L2 3.500z", "First sheet")}${this.arrow("M5 0v7L1 3.500z", "Previous sheet")}${this.arrow("M1 0v7l4-3.500z", "Next sheet")}${this.arrow("M6 0h1v7H6zM1 0v7l4-3.500z", "Last sheet")}</div>
      <div class="tabs"><button class="tab first">Data Input sheet</button><button class="tab sel">Pay sheet</button>
      ${TABS.map(([t, w, bg, fg]) => html`<button class="tab" style=${styleMap({ width: `${w}px`, background: bg, color: fg })}>${t}</button>`)}</div>
      <span class="edge"></span>
      <span class="bar"></span>
      <div class="hs">${this.arrow("M5 0v7L1 3.500z", "Scroll left")}<div class="thumb"><div class="marks"></div></div>${this.arrow("M1 0v7l4-3.500z", "Scroll right")}<span class="bar"></span></div>
      <svg class="ic corner" width="17" height="16" viewBox="0 0 17 16" aria-hidden="true"><path d="M12 5h2v2h-2zM8 9h2v2H8zM12 9h2v2h-2zM4 13h2v2H4zM8 13h2v2H8zM12 13h2v2h-2z" fill="#bbb"/></svg>`;
  }
}

@customElement("draw-bar")
class DrawBar extends LitElement {
  static styles = [shared, barStyles, css`
    :host { display: block; font-size: 11px; background: linear-gradient(90deg, #9ebcf4, #c4daf9 45%); padding: 2px 0 1px 2px; color: #000; }
    .text { justify-content: space-between; }
    .draw { width: 43px; padding: 0 3px 0 4px; }
    .auto { width: 79px; padding: 0 3px 0 4px; }
  `];
  render() {
    return html`<div class="bar"><span class="grip"></span><button class="text draw"><span>D<u>r</u>aw</span>${tri}</button>${tools("cursor |")}<button class="text auto"><span>A<u>u</u>toShapes</span>${tri}</button>${tools("line arrow rect oval tbox wart diag clipart pic | fill v lcol v font v lstyle dash arrs shad cube")}<span class="gap"></span>${cap}</div>`;
  }
}

const APPS: [string, boolean, unknown][] = [
  ["Internet Explorer", false, svg`<circle cx="16" cy="17" r="9" fill="none" stroke="#1c6fc4" stroke-width="5.500"/><path d="M8 17h17" stroke="#1c6fc4" stroke-width="4"/><path d="M19 19h11v5h-7z" fill="#3b97cf"/><path d="M7.500 13q3-6 9-6 5 0 7.500 4" fill="none" stroke="#6fc0f2" stroke-width="1.500"/><path d="M5 30Q-1 27 8 15 18 3 28 2q4 0 1 7 1-5-2-5-8 2-16 12-7 9-4 12 2 1 5-1-4 4-7 3z" fill="#f7cb45" stroke="#bf8d14" stroke-width=".5"/>`],
  ["Explorer", false, svg`<path d="M1 5q0-2 2-2h8l2 3h16q2 0 2 2v19H1z" fill="#eed68a" stroke="#b6933f"/><path d="M4 7h7v3H4zM13 5h9v4h-9z" fill="#fff"/><rect x="4" y="5" width="3" height="3" fill="#4aa53f"/><rect x="12" y="4" width="3" height="3" fill="#d8402c"/><rect x="20" y="7" width="3" height="3" fill="#3c76cc"/><path d="M1 11h30v17H1z" fill="#fbe9a9" stroke="#c9a64e"/><path d="M6 30v-9q0-2 2-2h16q2 0 2 2v9h-4v-7H10v7z" fill="#a9dbf6" stroke="#5d9fc7"/>`],
  ["Media Player", false, svg`<path d="M22 5h4l3 22h-7z" fill="#6fb4e2" stroke="#4a8ec2"/><path d="M10 5h13v22H10z" fill="#8fc6ea" stroke="#4a8ec2"/><rect x="4" y="5" width="16" height="22" fill="#b4daf2" stroke="#5b9dcd"/><circle cx="12" cy="16" r="8.500" fill="#f37f20" stroke="#fff"/><path d="M9.500 11l8 5-8 5z" fill="#fff"/>`],
  ["Winamp", false, svg`<path d="M17 1l13 14-15 16L2 17z" fill="#fff" stroke="#111" stroke-width="1.500"/><path d="M28 3L9 13l-3 6 8-1-9 11 18-11 3-6-8 1z" fill="#f6a01c" stroke="#222" stroke-width="1.200"/>`],
  ["Firefox", true, svg`<circle cx="17" cy="15" r="13" fill="#2767b3"/><path d="M17 2q8 1 11 7l-7 4q-5-4-4-11z" fill="#5aa7e4"/><path d="M4 6q1 1 2 2 3-2 6-1-1 2 1 4l4 1q0 2-4 3-2 5 3 6 5 1 9-3 2-4 1-9 5 5 3 12-3 9-13 9Q4 29 2 19 1 11 4 6z" fill="#e2641b"/><path d="M27 7q5 6 3 14-3 8-12 9 9-4 10-11 1-6-1-12z" fill="#f8b530"/>`],
  ["Chrome", false, svg`<g transform="translate(2 2) scale(1.75)">${chrome}</g>`],
  ["Excel", true, svg`<g transform="translate(2 2) scale(1.75)">${excel}</g>`],
];
const TRAY: unknown[] = [
  chrome,
  svg`<path d="M2 12q2-1 2-5 0-4 4-5 4 1 4 5 0 4 2 5zM6.500 13h3v2h-3z" fill="#50657e"/>`,
  svg`<path d="M1 2h4v5l6-6h4L9 8l6 6h-5L5 9v6H1z" fill="#e32126" stroke="#fff" stroke-width=".7"/><rect x="9" y="9" width="6" height="6" fill="#444" stroke="#ddd"/>`,
  svg`<path d="M1 5h3l4-4v14l-4-4H1z" fill="#fff"/><path d="M10 5.500q2 2.500 0 5M12 4q3 4 0 8M14 2.500q4 5.500 0 11" fill="none" stroke="#dfe8f2"/>`,
  svg`<circle cx="8" cy="8" r="7" fill="#13a832"/><path d="M2 8h12a6 6 0 0 1-12 0z" fill="#35d34a"/><path d="M3 5q5-5 10 0l-1 2H4z" fill="#eaffea"/>`,
  svg`<path d="M5 3.500h10.500v8H5zM8 14.500h6M11 12v2" fill="none" stroke="#fff" stroke-width="1.300"/><path d="M1 1v4q1 2 3 1V1M2.500 6v8H7" fill="none" stroke="#fff" stroke-width="1.300"/>`,
];

@customElement("task-bar")
class TaskBar extends LitElement {
  static styles = [shared, css`
    :host { display: flex; height: 40px; border-top: 1px solid #16406b; font-size: 11px; color: #fff;
      background: radial-gradient(circle at 0 125px, transparent 124px, rgba(150, 205, 250, .7) 130px, transparent 136px) 880px 0 / 200px 100% no-repeat, linear-gradient(180deg, rgba(255, 255, 255, .25), transparent 3px), linear-gradient(90deg, #1f5684, #2f83b8 6%, #3d98cd 22%, #3b9bd2 42%, #2a76b5 60%, #1f66ae 68%, #2468b0 80%, #12406f 84%, #174778); }
    .start { width: 58px; padding-left: 7px; }
    .app { width: 62px; display: grid; place-items: center; }
    .on { width: 60px; margin: 0 1px; border: 1px solid #cfe7f7; border-radius: 3px; background: linear-gradient(135deg, rgba(255, 255, 255, .65), rgba(255, 255, 255, .2)); }
    .fill { flex: 1; }
    .tray { display: flex; align-items: center; gap: 8px; }
    .clock { width: 86px; text-align: center; line-height: 17px; padding: 3px 0 0 8px; }
    .desk { width: 15px; border: 1px solid #6f8fae; background: linear-gradient(135deg, #51789f, #173f6b 50%); }
  `];
  render() {
    return html`
      <button class="start" aria-label="Start"><svg class="ic" width="39" height="38" viewBox="0 0 39 38"><defs><radialGradient id="orb" cx=".5" cy=".9"><stop offset="0" stop-color="#4bc0ea"/><stop offset=".6" stop-color="#1d5f96"/><stop offset="1" stop-color="#123a63"/></radialGradient></defs><circle cx="20" cy="19" r="18" fill="url(#orb)" stroke="#7fa8c6"/><path d="M6 14Q10 3 20 3t14 11q-14-5-28 0z" fill="#fff" opacity=".35"/><path d="M11 12q4-3 8-1l-1.500 7q-4-2-8 1z" fill="#ee6a2e"/><path d="M20.500 11.500q4 2 8.500 0l-1.500 7.500q-4.500 2-8.500-.5z" fill="#8dc63f"/><path d="M9.500 20.500q4-3 8-1L16 26q-4-2-8 1z" fill="#3b9de0"/><path d="M19 20q4 2 8.500 0L26 27q-4.500 2-8.500-.5z" fill="#fbc934"/></svg></button>
      ${APPS.map(([n, on, g]) => html`<button class=${classMap({ app: true, on })} aria-label=${n}><svg class="ic" width="32" height="32" viewBox="0 0 32 32">${g}</svg></button>`)}
      <span class="fill"></span>
      <div class="tray">${TRAY.map((g) => html`<svg class="ic" width="16" height="16" viewBox="0 0 16 16">${g}</svg>`)}</div>
      <div class="clock">7:41 PM<br />16-Sep-15</div>
      <button class="desk" aria-label="Show desktop"></button>`;
  }
}

@customElement("app-root")
class AppRoot extends LitElement {
  static styles = [shared, css`
    :host { display: flex; flex-direction: column; height: 100vh; overflow: hidden; background: #f0f0f0; }
    pay-grid { flex: 1; }
    .title { display: flex; align-items: center; height: 22px; flex: none; border-bottom: 1px solid #17304f; box-shadow: inset 0 -1px #9db9d6; padding-left: 1px; color: #000;
      background: linear-gradient(90deg, #93a8c4, #b6c8db 10%, #9fb5cc 25%, #c3d2e2 45%, #a9bdd2 57%, #4a719e 60%, #24568c 64%, #2b5f96 66%, #174478 72%, #1b4a80 90%, #5d7fa3); }
    h1 { flex: 1; margin: 0 0 0 4px; font-size: 12px; font-weight: normal; white-space: pre; line-height: 20px; }
    .win { display: flex; align-self: flex-start; height: 18px; margin-right: 2px; border: 1px solid #1b2f48; border-top: 0; border-radius: 0 0 5px 5px; overflow: hidden; box-shadow: 0 0 0 1px #b9cbdd; }
    .win button { width: 28px; display: grid; place-items: center; background: linear-gradient(#b5c5d6, #8ba1b8 45%, #4f6d8d 50%, #7793b0); border-right: 1px solid #1b2f48; }
    .win .mid { width: 27px; }
    .win .close { width: 47px; border: 0; background: linear-gradient(#e39a8a, #d36552 45%, #b32a17 50%, #d9593c); }
    .status { display: flex; flex: none; height: 18px; gap: 1px; padding: 1px 3px 1px 4px; font-size: 11px; line-height: 16px; color: #000; }
    .status p { margin: 0; flex: 1; }
    .cell { border: 1px solid #cfcfcf; line-height: 15px; text-align: center; }
  `];
  render() {
    return html`
      <header class="title">${glyph("excel")}<h1>Microsoft Excel - Amended All in One for Govt &amp; Non Govt TDS+HRA Calculation + Arrears Relief + Form 10E + Form 16 For AY 2016-17  [Shared]</h1>
        <div class="win">
          <button aria-label="Minimize"><svg class="ic" width="12" height="12" viewBox="0 0 12 12"><rect x="1" y="7" width="10" height="3" fill="#fff" stroke="#445" stroke-width=".6"/></svg></button>
          <button class="mid" aria-label="Restore"><svg class="ic" width="12" height="12" viewBox="0 0 12 12"><path d="M4 3V1.500h6.500V8H9M2 4h6v6H2z" fill="none" stroke="#fff" stroke-width="1.800"/></svg></button>
          <button class="close" aria-label="Close"><svg class="ic" width="12" height="12" viewBox="0 0 12 12"><path d="M2 2l8 8M10 2l-8 8" stroke="#fff" stroke-width="2.600"/></svg></button>
        </div>
      </header>
      <excel-toolbars></excel-toolbars>
      <pay-grid></pay-grid>
      <sheet-tabs></sheet-tabs>
      <draw-bar></draw-bar>
      <footer class="status"><p>Ready</p>${([[34, ""], [112, ""], [25, ""], [30, ""], [28, "NUM"], [28, ""], [25, ""], [20, ""]] as [number, string][]).map(
        ([w, t]) => html`<span class="cell" style=${styleMap({ width: `${w}px` })}>${t}</span>`)}</footer>
      <task-bar></task-bar>`;
  }
}
